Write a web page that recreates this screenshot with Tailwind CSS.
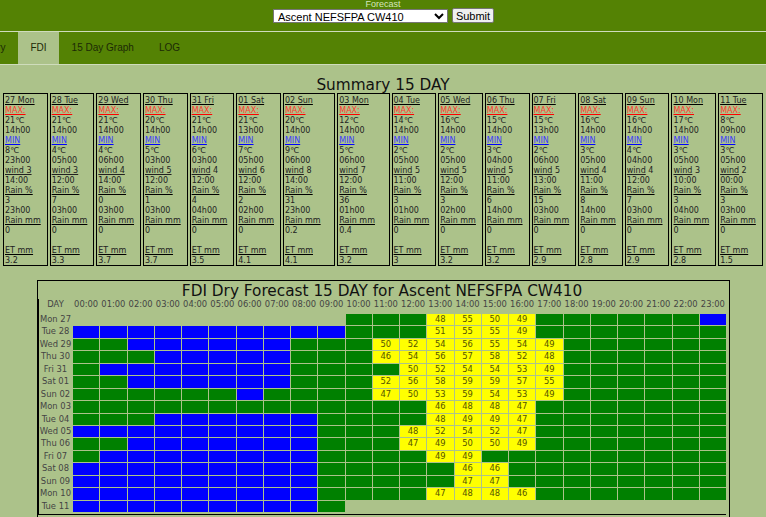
<!DOCTYPE html>
<html lang="en">
<head>
<meta charset="UTF-8">
<title>Forecast</title>
<script src="https://cdn.jsdelivr.net/npm/@tailwindcss/browser@4"></script>
</head>
<body class="bg-[#acc28a] h-[517px] overflow-hidden font-['DejaVu_Sans',sans-serif] text-[#222]">
  <!-- top form -->
  <header class="bg-[#548204] h-[31px] flex flex-col items-center font-['Liberation_Sans',sans-serif]">
    <div class="text-[9px] leading-[8px] h-[8px] text-[#d5e6bd]">Forecast</div>
    <form class="flex items-center gap-[4px] ml-px">
      <select class="w-[175px] h-[14px] text-[11px] leading-[12px] bg-white text-black border border-[#767676] pl-0">
        <option>Ascent NEFSFPA CW410</option>
      </select>
      <button type="button" class="w-[42px] h-[15px] text-[11px] leading-[12px] bg-[#efefef] text-black border border-[#767676] rounded-[2px]">Submit</button>
    </form>
  </header>
  <!-- tabs -->
  <nav class="h-[34px] bg-[#548204] border-y border-[#cfdcbc] flex items-stretch overflow-hidden font-['Liberation_Sans',sans-serif] text-[10px] text-[#1c2a06]">
    <a class="flex items-center px-[12.5px] pb-px ml-[-49.8px]">Summary</a>
    <a class="flex items-center px-[12.5px] pb-px bg-[#acc28a]">FDI</a>
    <a class="flex items-center px-[12.5px] pb-px">15 Day Graph</a>
    <a class="flex items-center px-[12.5px] pb-px">LOG</a>
  </nav>

  <main>
    <h2 class="text-[15.3px] leading-[18px] text-center mt-[11px] text-[#111]">Summary 15 DAY</h2>
    <div id="cards" class="grid grid-cols-[repeat(6,44.67px)_52.3px_52.3px_repeat(8,44.67px)] gap-x-[2px] pl-[3px] -mt-px"></div>

    <section class="ml-[37px] w-[693px] mt-[14px] border border-black pr-[3px] pb-[8px]">
      <h2 class="h-[18px] text-[15.3px] leading-[20px] text-center text-[#111]">FDI Dry Forecast 15 DAY for Ascent NEFSFPA CW410</h2>
      <div id="fdi" class="grid grid-cols-[33px_repeat(24,1fr)] grid-rows-[14px_repeat(16,1fr)] gap-px h-[216px] border-l border-b border-black pb-[2px] text-[8.4px] leading-[11px] text-center"></div>
    </section>
  </main>

  <script>
    // date, max, time, min, time, wind, time, rain %, time, rain mm, et
    const days = [
      ['27 Mon','21','14h00','8','23h00','3','14:00','3','23h00','0','3.2'],
      ['28 Tue','21','14h00','4','05h00','3','12:00','7','03h00','0','3.3'],
      ['29 Wed','21','14h00','4','06h00','4','14:00','0','03h00','0','3.7'],
      ['30 Thu','20','14h00','5','03h00','5','12:00','1','03h00','0','3.7'],
      ['31 Fri','21','14h00','6','03h00','4','12:00','4','04h00','0','3.5'],
      ['01 Sat','21','13h00','7','05h00','6','12:00','2','02h00','0','4.1'],
      ['02 Sun','20','14h00','9','06h00','8','14:00','31','23h00','0.2','4.1'],
      ['03 Mon','12','14h00','5','06h00','7','12:00','36','01h00','0.4','3.2'],
      ['04 Tue','14','14h00','2','05h00','5','11:00','3','01h00','0','3'],
      ['05 Wed','16','14h00','2','05h00','5','12:00','3','02h00','0','3.2'],
      ['06 Thu','15','14h00','3','04h00','5','11:00','6','14h00','0','3.2'],
      ['07 Fri','15','13h00','2','06h00','5','13:00','15','03h00','0','2.9'],
      ['08 Sat','16','14h00','3','05h00','4','11:00','8','14h00','0','2.8'],
      ['09 Sun','16','14h00','4','04h00','4','12:00','7','03h00','0','2.9'],
      ['10 Mon','17','14h00','3','05h00','3','10:00','3','04h00','0','2.8'],
      ['11 Tue','8','09h00','3','05h00','2','00:00','3','03h00','0','1.5']
    ];
    const u = t => `<div><u class="underline decoration-black">${t}</u></div>`;
    document.getElementById('cards').innerHTML = days.map((d, i) => `
      <div class="border border-black h-[173px] pl-px pt-[2px] text-[8px] leading-[10px] whitespace-nowrap">
        ${u(d[0])}
        <div><u class="underline decoration-[#ff0000] text-[#ff3b30]">MAX:</u></div>
        <div>${d[1]}℃</div>
        <div>${d[2]}</div>
        <div><u class="underline decoration-[#0000ff] text-[#3b3bff]">MIN</u></div>
        <div>${d[3]}℃</div>
        <div>${d[4]}</div>
        <div>${i < 4 ? `<u class="underline">wind ${d[5]}</u>` : `<u class="underline">wind</u> ${d[5]}`}</div>
        <div>${d[6]}</div>
        ${u('Rain %')}
        <div>${d[7]}</div>
        <div>${d[8]}</div>
        ${u('Rain mm')}
        <div>${d[9]}</div>
        <div class="h-[10px]"></div>
        ${u('ET mm')}
        <div>${d[10]}</div>
      </div>`).join('');

    // b blue, g green, _ empty, numbers on yellow; Nx repeats a cell N times
    const rows = [
      ['Mon 27','10_ 3g 48 55 50 49 6g 1b'],
      ['Tue 28','10b 3g 51 55 55 49 7g'],
      ['Wed 29','2g 6b 3g 50 52 54 56 55 54 49 6g'],
      ['Thu 30','3g 5b 3g 46 54 56 57 58 52 48 6g'],
      ['Fri 31','1g 7b 4g 50 52 54 54 53 49 6g'],
      ['Sat 01','2g 6b 3g 52 56 58 59 59 57 55 6g'],
      ['Sun 02','6g 1b 4g 47 50 53 59 54 53 49 6g'],
      ['Mon 03','13g 46 48 48 47 7g'],
      ['Tue 04','3g 6b 4g 48 49 49 47 7g'],
      ['Wed 05','9b 3g 48 52 54 52 47 7g'],
      ['Thu 06','2g 7b 3g 47 49 50 50 49 7g'],
      ['Fri 07','1g 8b 4g 49 49 9g'],
      ['Sat 08','9b 5g 46 46 8g'],
      ['Sun 09','9b 5g 47 47 8g'],
      ['Mon 10','9b 4g 47 48 48 46 7g'],
      ['Tue 11','9b 1g 14_']
    ];
    const fills = { b: 'bg-[#0000ff]', g: 'bg-[#008000]', _: '' };
    let html = '<div class="text-[#444]">DAY</div>';
    for (let h = 0; h < 24; h++) html += `<div class="whitespace-nowrap text-[#444]">${String(h).padStart(2, '0')}:00</div>`;
    rows.forEach(([label, spec]) => {
      html += `<div class="text-[#444] whitespace-nowrap">${label}</div>`;
      spec.split(' ').forEach(tok => {
        const m = tok.match(/^(\d+)([bg_])$/);
        if (m) html += `<div class="${fills[m[2]]}"></div>`.repeat(+m[1]);
        else html += `<div class="bg-[#ffff00] text-[#555500]">${tok}</div>`;
      });
    });
    document.getElementById('fdi').innerHTML = html;
  </script>
</body>
</html>
